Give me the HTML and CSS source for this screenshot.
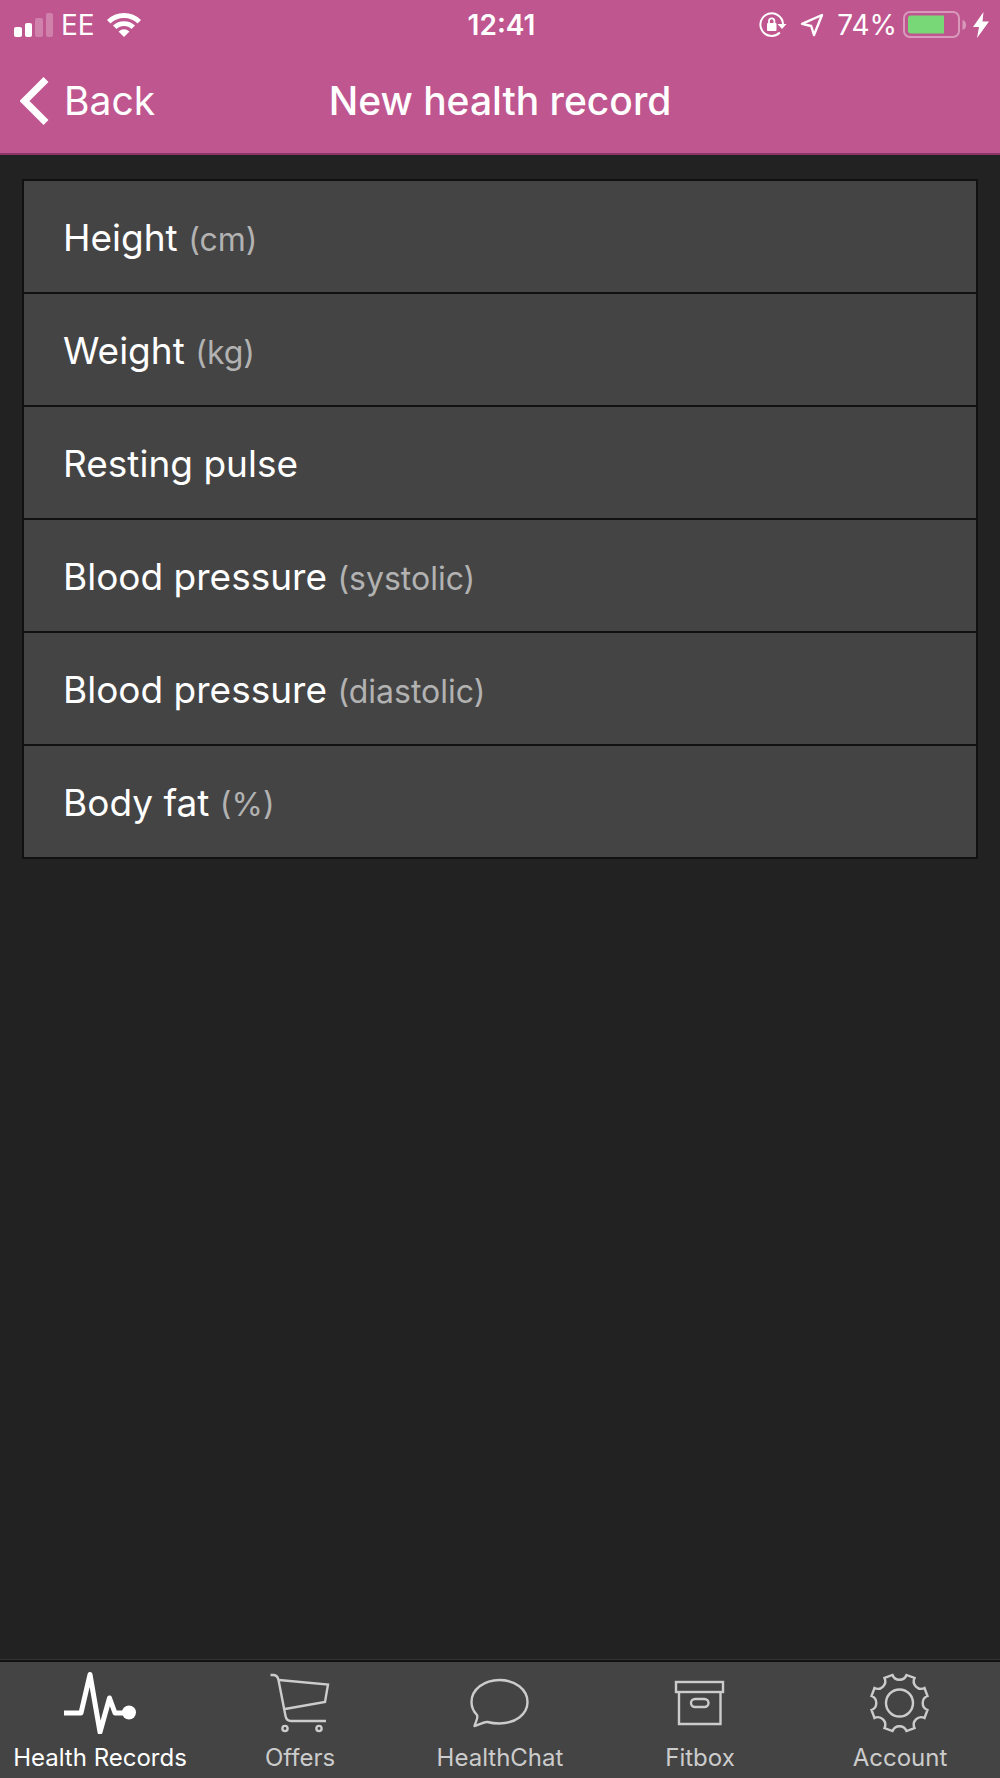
FILE: index.html
```html
<!DOCTYPE html>
<html lang="en">
<head>
    <meta charset="UTF-8">
    <meta name="viewport" content="width=device-width, initial-scale=1.0">
    <title>New health record</title>
    <link rel="stylesheet" href="styles.css">
</head>
<body>
    <header class="header">
        <div class="status-bar">
            <div class="status-left">
                <svg width="39" height="26" viewBox="0 0 39 26" fill="#fff">
                    <rect x="0" y="15" width="8" height="10" rx="2"/>
                    <rect x="11" y="11" width="7" height="14" rx="2"/>
                    <rect x="21" y="6" width="8" height="19" rx="2" opacity="0.25"/>
                    <rect x="32" y="1" width="7" height="24" rx="2" opacity="0.25"/>
                </svg>
                <span class="carrier">EE</span>
                <svg width="34" height="26" viewBox="0 0 34 26" fill="#fff">
                    <path d="M0 8Q7 1 17 1T34 8L30.500 11.500Q25 6 17 6T3.500 11.500Z"/>
                    <path d="M6 13.500Q10.500 9.200 17 9.200T28 13.500L24.500 17Q21.500 14 17 14T9.500 17Z"/>
                    <path d="M11.500 19.500Q17 15 22.500 19.500L17 25Z"/>
                </svg>
            </div>
            <span class="time">12:41</span>
            <div class="status-right">
                <svg width="28" height="26" viewBox="0 0 28 26">
                    <path d="M20.800 20.500A11.300 11.300 0 1 1 24 12" fill="none" stroke="#fff" stroke-width="2"/>
                    <path d="M18.500 12H27.500L23 17Z" fill="#fff"/>
                    <rect x="8" y="11" width="9.500" height="8" rx="1" fill="#fff"/>
                    <path d="M10 12V9a2.700 2.700 0 0 1 5.400 0v3" fill="none" stroke="#fff" stroke-width="1.800"/>
                </svg>
                <svg class="location" width="24" height="26" viewBox="0 0 24 26">
                    <path d="M22 3 2 11.800 11.200 14 14 23Z" fill="none" stroke="#fff" stroke-width="2.400" stroke-linejoin="round"/>
                </svg>
                <span class="percent">74%</span>
                <svg width="64" height="28" viewBox="0 0 64 28">
                    <rect x="1" y="1" width="55" height="25" rx="6" fill="none" stroke="#fff" stroke-width="2" opacity="0.4"/>
                    <path d="M59.500 9Q63 10 63 14T59.500 19Z" fill="#fff" opacity="0.4"/>
                    <path d="M8 4.500H41V22.500H8Q5 22.500 5 19.500V7.500Q5 4.500 8 4.500Z" fill="#78d878"/>
                </svg>
                <svg class="bolt" width="16" height="26" viewBox="0 0 16 26" fill="#fff">
                    <path d="M10.500 0 0 15H6L4 26 16 9.500H9.500Z"/>
                </svg>
            </div>
        </div>
        <div class="nav-bar">
            <button class="back-btn" type="button">
                <svg width="29" height="48" viewBox="0 0 29 48">
                    <path d="M26 2.500 4.500 24 26 45.500" fill="none" stroke="#fff" stroke-width="7"/>
                </svg>
                Back
            </button>
            <h1 class="title">New health record</h1>
        </div>
    </header>

    <main class="content">
        <form class="record-form">
            <div class="field">
                <label for="height">Height <small>(cm)</small></label>
                <input type="text" id="height">
            </div>
            <div class="field">
                <label for="weight">Weight <small>(kg)</small></label>
                <input type="text" id="weight">
            </div>
            <div class="field">
                <label for="pulse">Resting pulse</label>
                <input type="text" id="pulse">
            </div>
            <div class="field">
                <label for="systolic">Blood pressure <small>(systolic)</small></label>
                <input type="text" id="systolic">
            </div>
            <div class="field">
                <label for="diastolic">Blood pressure <small>(diastolic)</small></label>
                <input type="text" id="diastolic">
            </div>
            <div class="field">
                <label for="fat">Body fat <small>(%)</small></label>
                <input type="text" id="fat">
            </div>
        </form>
    </main>

    <nav class="tab-bar">
        <a class="tab active" href="#records">
            <svg width="80" height="64" viewBox="0 0 80 64">
                <path class="pulse" d="M4 43H21L30 4.500 40 62 49.500 28 55 43H69" stroke-linejoin="round"/>
                <circle cx="69" cy="42.500" r="7" fill="currentColor" stroke="none"/>
            </svg>
            Health Records
        </a>
        <a class="tab" href="#offers">
            <svg width="80" height="64" viewBox="0 0 80 64">
                <path d="M10.500 5H13Q17.500 5 18.500 10L25.500 46Q26.500 51 31 51H66"/>
                <path d="M19 10 68 14.500 65 32 25 39"/>
                <circle cx="25" cy="58.500" r="2.600"/>
                <circle cx="59" cy="58.500" r="2.600"/>
            </svg>
            Offers
        </a>
        <a class="tab" href="#chat">
            <svg width="80" height="64" viewBox="0 0 80 64">
                <path d="M17 45C13 41 11.500 37 11.500 32C11.500 19.500 24 10 39.500 10S67.500 19.500 67.500 32S55 53.500 39.500 53.500C35 53.500 31 53 27.500 52C24 51.500 20 54.500 14.500 56C15.500 52 18.500 48 17 45Z" stroke-linejoin="round"/>
            </svg>
            HealthChat
        </a>
        <a class="tab" href="#fitbox">
            <svg width="80" height="64" viewBox="0 0 80 64">
                <rect x="16" y="12" width="47" height="10"/>
                <path d="M19 22V54H60.500V22"/>
                <rect x="31" y="29" width="17.500" height="8" rx="4"/>
            </svg>
            Fitbox
        </a>
        <a class="tab" href="#account">
            <svg width="80" height="64" viewBox="0 0 80 64">
                <g transform="translate(39.500 33)">
                    <path d="M7-28 15-25A7.500 7.500 0 0 0 25-15L28-7A7.500 7.500 0 0 0 28 7L25 15A7.500 7.500 0 0 0 15 25L7 28A7.500 7.500 0 0 0-7 28L-15 25A7.500 7.500 0 0 0-25 15L-28 7A7.500 7.500 0 0 0-28-7L-25-15A7.500 7.500 0 0 0-15-25L-7-28A7.500 7.500 0 0 0 7-28Z"/>
                    <circle r="13.500"/>
                </g>
            </svg>
            Account
        </a>
    </nav>
</body>
</html>
```
FILE: styles.css
```css
:root {
    --pink: #bf568f;
    --pink-dark: #8d3568;
    --page: #222;
    --panel: #444;
    --line: #111;
    --muted: #b2b2b2;
    --tab: #ccc;
}

* {
    margin: 0;
    padding: 0;
    box-sizing: border-box;
    font-family: Inter, 'Liberation Sans', sans-serif;
}

body {
    min-height: 100vh;
    display: flex;
    flex-direction: column;
    background: var(--page);
    color: #fff;
}

.header {
    background: var(--pink);
    border-bottom: 2px solid var(--pink-dark);
}

.status-bar {
    display: grid;
    grid-template-columns: 1fr auto 1fr;
    align-items: center;
    height: 50px;
    padding: 0 11px 0 14px;
    font-size: 28px;
    line-height: 32px;
}

.status-left, .status-right {
    display: flex;
    align-items: center;
}

.status-left {
    gap: 8px;
}

.carrier {
    margin-right: 4px;
}

.status-right {
    justify-content: flex-end;
    gap: 6px;
}

.location {
    margin: 0 7px;
}

.time {
    font-weight: 600;
}

.nav-bar {
    display: grid;
    grid-template-columns: 1fr auto 1fr;
    align-items: center;
    padding: 27px 20px 28px;
}

.back-btn {
    justify-self: start;
    display: flex;
    align-items: center;
    gap: 15px;
    background: none;
    border: none;
    color: #fff;
    font-size: 39px;
    line-height: 48px;
    cursor: pointer;
}

.title {
    font-size: 39px;
    line-height: 48px;
    font-weight: 500;
}

.content {
    flex: 1;
    padding: 24px 22px;
}

.record-form {
    background: var(--panel);
    border: 2px solid var(--line);
}

.field {
    display: flex;
    align-items: center;
    padding: 33px 39px 31px;
}

.field + .field {
    border-top: 2px solid var(--line);
}

.field label {
    font-size: 37px;
    line-height: 47px;
}

.field small {
    font-size: 32px;
    line-height: 32px;
    color: var(--muted);
}

.field input {
    flex: 1;
    min-width: 0;
    height: 47px;
    margin-left: 16px;
    background: none;
    border: none;
    outline: none;
    color: #fff;
    font-size: 37px;
}

.tab-bar {
    display: flex;
    background: var(--panel);
    border-top: 2px solid var(--line);
    box-shadow: 0 -1px 0 #333;
}

.tab {
    flex: 1;
    display: flex;
    flex-direction: column;
    align-items: center;
    gap: 8px;
    padding: 8px 0 4px;
    color: var(--tab);
    font-size: 24px;
    line-height: 32px;
    text-decoration: none;
    white-space: nowrap;
}

.tab svg {
    fill: none;
    stroke: currentColor;
    stroke-width: 2.4;
}

.tab .pulse {
    stroke-width: 5;
}

.tab.active {
    color: #fff;
}
```
